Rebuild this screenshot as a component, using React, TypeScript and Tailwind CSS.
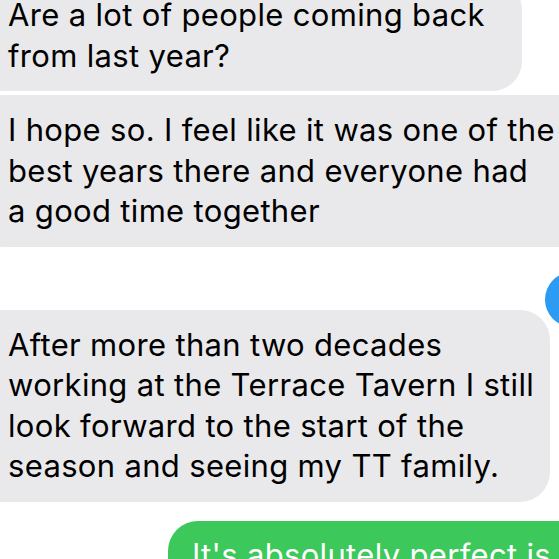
const font = { fontFamily: 'Inter, "Noto Sans", sans-serif' };

function Received({ lines, className }: { lines: string[]; className: string }) {
  return (
    <div className={`-ml-[26px] rounded-[30px] bg-[#e9e9eb] py-[15px] pl-[34px] text-[31px] leading-[40.5px] tracking-[0.33px] text-black whitespace-nowrap ${className}`}>
      {lines.map((l, i) => (
        <div key={i}>{l}</div>
      ))}
    </div>
  );
}

export default function App() {
  return (
    <div className="relative h-[559px] w-[559px] overflow-hidden bg-white" style={font}>
      <div className="-mt-[20px] flex flex-col">
        <Received className="w-[548px]" lines={['Are a lot of people coming back', 'from last year?']} />
        <Received
          className="mt-[4px] w-[640px]"
          lines={['I hope so. I feel like it was one of the', 'best years there and everyone had', 'a good time together']}
        />

        {/* partially visible sent bubble */}
        <div className="relative z-10 mt-[25px] pl-[545px]">
          <div className="h-[55px] w-[70px] rounded-[28px] bg-[#2b9bf4] ring-2 ring-white" />
        </div>

        <Received
          className="-mt-[17px] w-[576px]"
          lines={[
            'After more than two decades',
            'working at the Terrace Tavern I still',
            'look forward to the start of the',
            'season and seeing my TT family.',
          ]}
        />

        <div className="ml-[168px] mt-[19px] w-[500px] rounded-[30px] bg-[#3cc85a] pb-[15px] pl-[24px] pt-[14px] text-[31px] leading-[40.5px] tracking-[0.33px] text-white whitespace-nowrap">
          It's absolutely perfect is
        </div>
      </div>
    </div>
  );
}
